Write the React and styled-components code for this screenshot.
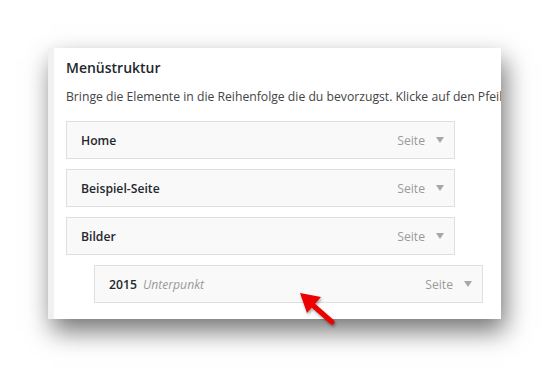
import React from "react";
import styled, { createGlobalStyle } from "styled-components";

const Global = createGlobalStyle`
  html, body {
    margin: 0;
    background: #fff;
    font-family: "Open Sans", "Liberation Sans", sans-serif;
  }
`;

const Stage = styled.div`
  position: relative;
  width: 550px;
  height: 369px;
  padding: 48px 0 0 48px;
  box-sizing: border-box;
`;

const Panel = styled.section`
  width: 453px;
  height: 271px;
  box-sizing: border-box;
  background: #fff;
  border-left: 6px solid #f1f1f1;
  padding: 10px 0 0 12px;
  overflow: hidden;
  box-shadow: 4px 12px 24px rgba(0, 0, 0, 0.55);
`;

const Title = styled.h2`
  margin: 0;
  font-size: 14px;
  line-height: 20px;
  font-weight: 600;
  color: #23282d;
`;

const Lead = styled.p`
  margin: 10px 0 0;
  font-size: 12.2px;
  line-height: 18px;
  color: #444;
  white-space: nowrap;
`;

const List = styled.ul`
  list-style: none;
  margin: 15px 0 0;
  padding: 0;
  display: flex;
  flex-direction: column;
  gap: 10px;
`;

const Item = styled.li`
  display: flex;
  align-items: center;
  width: 389px;
  height: 38px;
  box-sizing: border-box;
  margin-left: ${(p) => (p.$depth ? p.$depth * 28 : 0)}px;
  padding: 0 10px 0 14px;
  background: #f9f9f9;
  border: 1px solid #dfdfdf;
  font-size: 12.2px;
`;

const Name = styled.span`
  font-weight: 600;
  color: #23282d;
`;

const Sub = styled.span`
  margin-left: 6px;
  font-style: italic;
  color: #999;
`;

const Type = styled.span`
  margin-left: auto;
  color: #999;
`;

const Toggle = styled.span`
  margin-left: 11px;
  width: 0;
  height: 0;
  border-left: 4px solid transparent;
  border-right: 4px solid transparent;
  border-top: 6px solid #a7a7a7;
`;

const Pointer = styled.svg`
  position: absolute;
  left: 290px;
  top: 285px;
  filter: drop-shadow(1px 2px 1.5px rgba(0, 0, 0, 0.35));
`;

const items = [
  { name: "Home" },
  { name: "Beispiel-Seite" },
  { name: "Bilder" },
  { name: "2015", sub: "Unterpunkt", depth: 1 },
];

export default function App() {
  return (
    <Stage>
      <Global />
      <Panel>
        <Title>Menüstruktur</Title>
        <Lead>
          Bringe die Elemente in die Reihenfolge die du bevorzugst. Klicke auf
          den Pfeil rechts neben dem Element, um weitere Einstellungen
        </Lead>
        <List>
          {items.map((it) => (
            <Item key={it.name} $depth={it.depth}>
              <Name>{it.name}</Name>
              {it.sub && <Sub>{it.sub}</Sub>}
              <Type>Seite</Type>
              <Toggle />
            </Item>
          ))}
        </List>
      </Panel>
      <Pointer width="50" height="45" viewBox="0 0 50 45">
        <line x1="18" y1="16" x2="42" y2="37" stroke="#ec0000" strokeWidth="5" strokeLinecap="round" />
        <polygon points="10,8 31,12 17,28" fill="#ec0000" />
      </Pointer>
    </Stage>
  );
}
